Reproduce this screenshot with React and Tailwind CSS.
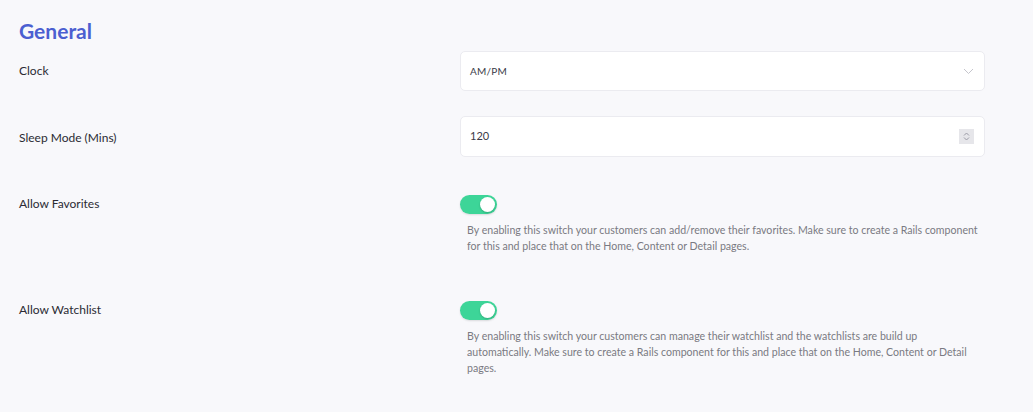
import { useState } from 'react';

function Toggle({ on, onChange }) {
  return (
    <button
      onClick={() => onChange(!on)}
      className={`relative block w-[37px] h-[19px] rounded-full transition-colors shadow-[0_1px_2px_rgba(0,0,0,0.12)] ${
        on ? 'bg-[#3dd598]' : 'bg-gray-300'
      }`}
    >
      <span
        className={`absolute top-[2px] w-[15px] h-[15px] rounded-full bg-white shadow-[0_1px_2px_rgba(0,0,0,0.2)] transition-all ${
          on ? 'left-[20px]' : 'left-[2px]'
        }`}
      ></span>
    </button>
  );
}

export default function App() {
  const [favorites, setFavorites] = useState(true);
  const [watchlist, setWatchlist] = useState(true);

  return (
    <div className="min-h-[412px] bg-[#f8f8fb] pl-[19px] pr-[48px] pt-[17px] font-['Lato','Open_Sans',sans-serif] text-[#2b2b33]">
      <h2 className="text-[21px] leading-[28px] font-bold text-[#4b5fd1] mb-[6px]">General</h2>

      {/* Clock */}
      <div className="flex">
        <div className="w-[441px] pt-[12px] text-[12px] leading-[16px]">Clock</div>
        <div className="flex-1 h-[40px] bg-white border border-[#ebebf0] rounded-[5px] flex items-center justify-between px-[9px]">
          <span className="text-[10px] text-[#3b3b48] tracking-[0.2px]">AM/PM</span>
          <svg width="11" height="7" viewBox="0 0 11 7" fill="none" className="mr-[1px]">
            <path d="M1 1l4.5 4.5L10 1" stroke="#c5c5cc" strokeWidth="1" />
          </svg>
        </div>
      </div>

      {/* Sleep Mode */}
      <div className="flex mt-[25px]">
        <div className="w-[441px] pt-[14px] text-[12px] leading-[16px]">Sleep Mode (Mins)</div>
        <div className="flex-1 h-[41px] bg-white border border-[#ebebf0] rounded-[5px] flex items-center justify-between px-[9px]">
          <span className="text-[11px] text-[#3b3b48]">120</span>
          <div className="w-[15px] h-[15px] bg-[#e6e6ea] flex flex-col items-center justify-center gap-[1px] mr-[1px]">
            <svg width="7" height="4" viewBox="0 0 7 4" fill="none">
              <path d="M1 3.5L3.5 1L6 3.5" stroke="#9a9aa5" strokeWidth="1" />
            </svg>
            <svg width="7" height="4" viewBox="0 0 7 4" fill="none">
              <path d="M1 0.5L3.5 3L6 0.5" stroke="#9a9aa5" strokeWidth="1" />
            </svg>
          </div>
        </div>
      </div>

      {/* Allow Favorites */}
      <div className="flex mt-[38px]">
        <div className="w-[441px] pt-[1px] text-[12px] leading-[16px]">Allow Favorites</div>
        <div className="flex-1">
          <Toggle on={favorites} onChange={setFavorites} />
          <p className="mt-[8px] pl-[7px] pr-[4px] text-[10.6px] leading-[16px] text-[#7a7a82]">
            By enabling this switch your customers can add/remove their favorites. Make sure to create a Rails component for this and place that on the Home, Content or Detail pages.
          </p>
        </div>
      </div>

      {/* Allow Watchlist */}
      <div className="flex mt-[47px]">
        <div className="w-[441px] pt-[1px] text-[12px] leading-[16px]">Allow Watchlist</div>
        <div className="flex-1">
          <Toggle on={watchlist} onChange={setWatchlist} />
          <p className="mt-[8px] pl-[7px] pr-[4px] text-[10.6px] leading-[16px] text-[#7a7a82]">
            By enabling this switch your customers can manage their watchlist and the watchlists are build up automatically. Make sure to create a Rails component for this and place that on the Home, Content or Detail pages.
          </p>
        </div>
      </div>
    </div>
  );
}
